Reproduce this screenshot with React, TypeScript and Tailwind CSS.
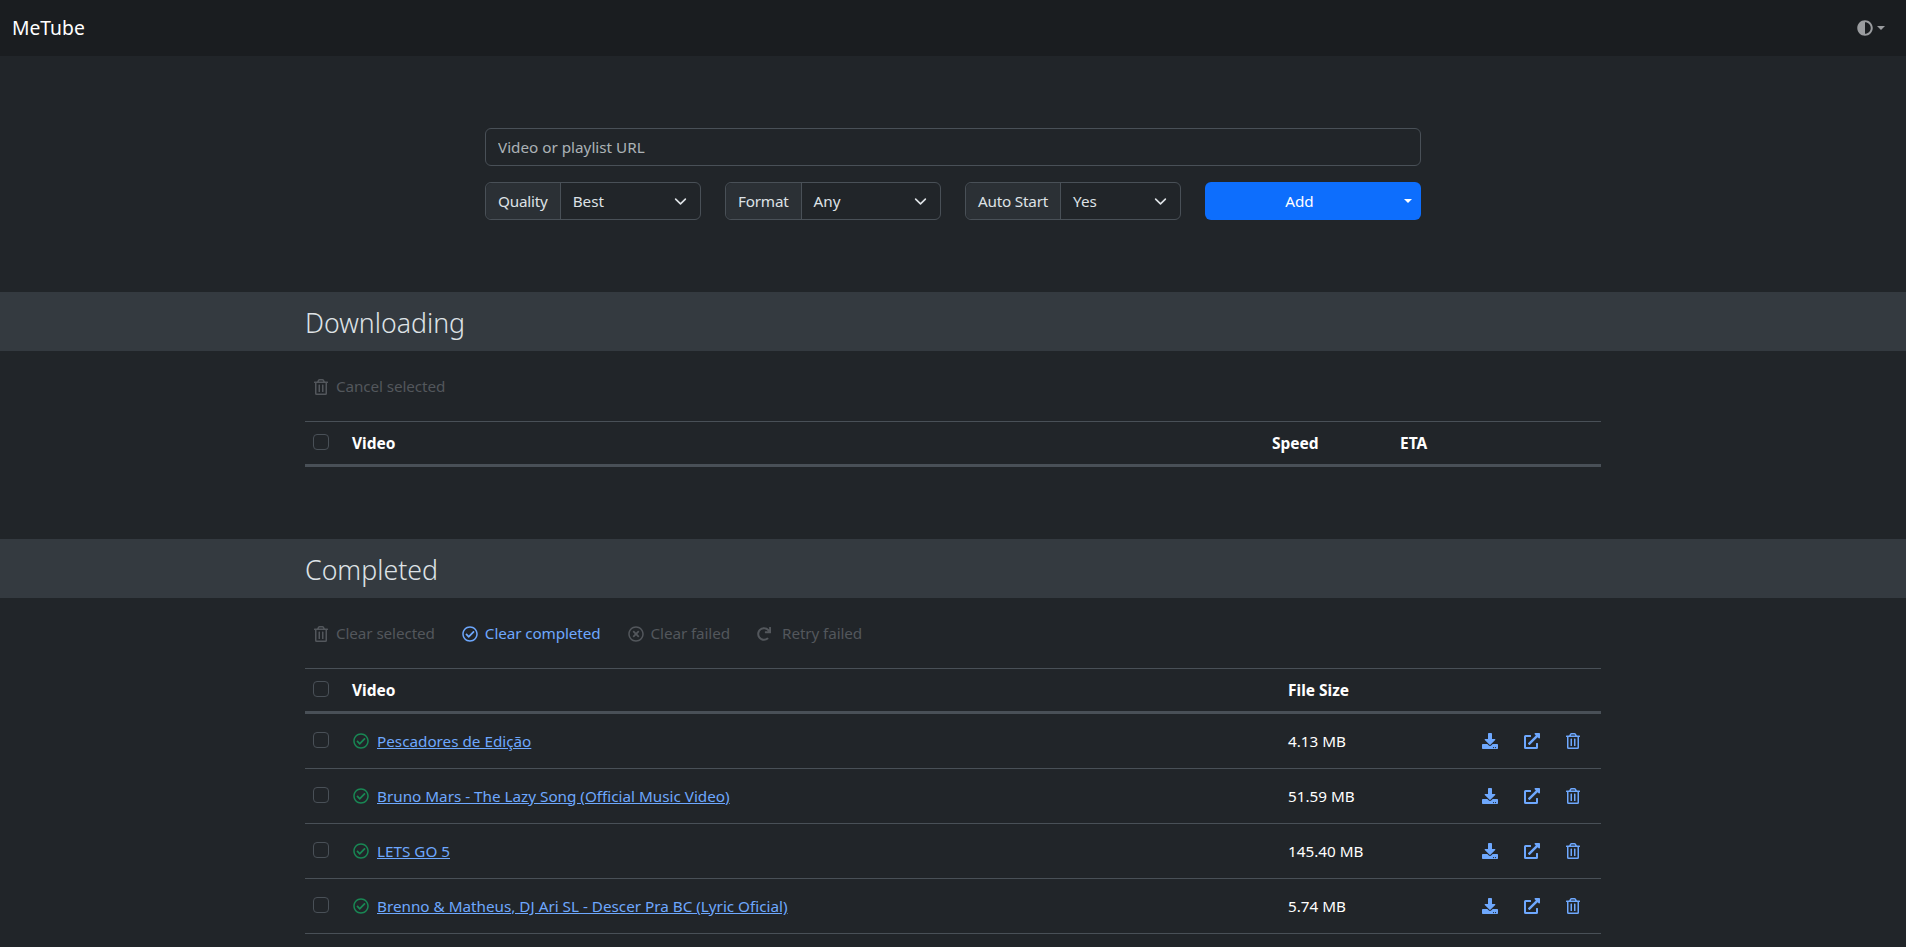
import { FaAdjust, FaDownload, FaExternalLinkAlt, FaRedo, FaRegCheckCircle, FaRegTimesCircle, FaRegTrashAlt } from "react-icons/fa"

const completed = [
  { title: "Pescadores de Edição", size: "4.13 MB" },
  { title: "Bruno Mars - The Lazy Song (Official Music Video)", size: "51.59 MB" },
  { title: "LETS GO 5", size: "145.40 MB" },
  { title: "Brenno & Matheus, DJ Ari SL - Descer Pra BC (Lyric Oficial)", size: "5.74 MB" },
]

function Chevron() {
  return (
    <svg viewBox="0 0 16 16" className="h-[13px] w-[13px] shrink-0" fill="none" stroke="#dee2e6" strokeWidth="2" strokeLinecap="round" strokeLinejoin="round">
      <path d="m2 5 6 6 6-6" />
    </svg>
  )
}

function SelectGroup({ label, value }: { label: string; value: string }) {
  return (
    <div className="flex h-[38px] rounded-md border border-[#495057] text-[#dee2e6]">
      <span className="flex items-center rounded-l-md border-r border-[#495057] bg-[#2b3035] px-3 tracking-[-0.2px]">{label}</span>
      <div className="flex flex-1 items-center justify-between pl-3 pr-[13px]">
        <span>{value}</span>
        <Chevron />
      </div>
    </div>
  )
}

function Checkbox() {
  return <input type="checkbox" className="mb-[3px] h-4 w-4 appearance-none rounded border border-[#495057] bg-[#212529]" />
}

function SectionHeader({ title }: { title: string }) {
  return (
    <div className="h-[59px] bg-[#343a40]">
      <div className="mx-auto w-[1296px] pt-[9px] text-[26.7px] leading-[43px] font-light text-[#dee2e6]">{title}</div>
    </div>
  )
}

function ActionButton({ icon, label, active }: { icon: React.ReactNode; label: string; active?: boolean }) {
  return (
    <button className={`flex items-center gap-[7px] px-[9px] tracking-[-0.1px] ${active ? "text-[#6ea8fe]" : "text-[#53575c]"}`}>
      {icon}
      <span>{label}</span>
    </button>
  )
}

export default function App() {
  return (
    <div className="min-h-[947px] bg-[#212529] font-['Noto_Sans',sans-serif] text-[15.25px] text-[#dee2e6]">
      {/* Navbar */}
      <nav className="flex h-14 items-center justify-between bg-[#1a1d20] pl-3 pr-[21px]">
        <span className="text-[19.3px] text-white">MeTube</span>
        <div className="flex items-center gap-1 text-[#9a9c9f]">
          <FaAdjust size={16} />
          <span className="h-0 w-0 border-x-[4px] border-t-[4px] border-x-transparent border-t-[#9a9c9f]" />
        </div>
      </nav>

      {/* Add form */}
      <div className="mx-auto w-[936px] pt-[72px] pb-[72px]">
        <input
          placeholder="Video or playlist URL"
          className="h-[38px] w-full rounded-md border border-[#495057] bg-[#212529] px-3 outline-none placeholder:text-[#dee2e6bf]"
        />
        <div className="mt-4 grid grid-cols-4 gap-6">
          <SelectGroup label="Quality" value="Best" />
          <SelectGroup label="Format" value="Any" />
          <SelectGroup label="Auto Start" value="Yes" />
          <div className="flex h-[38px] overflow-hidden rounded-md bg-[#0d6efd] text-white">
            <button className="flex-1">Add</button>
            <button className="flex w-[27px] items-center justify-center">
              <span className="h-0 w-0 border-x-[4px] border-t-[4px] border-x-transparent border-t-white" />
            </button>
          </div>
        </div>
      </div>

      {/* Downloading */}
      <SectionHeader title="Downloading" />
      <div className="mx-auto w-[1296px]">
        <div className="flex h-[70px] items-center pt-[1px]">
          <ActionButton icon={<FaRegTrashAlt size={16} className="mr-[1px] w-[14px]" />} label="Cancel selected" />
        </div>
        <div className="grid h-[46px] grid-cols-[47px_1fr_128px_201px] items-center border-t border-b-[3px] border-t-[#495057] border-b-[#495057] text-[15.5px] font-bold text-white">
          <div className="flex items-center pl-2">
            <Checkbox />
          </div>
          <span className="pt-[2px]">Video</span>
          <span className="pt-[2px]">Speed</span>
          <span className="pt-[2px]">ETA</span>
        </div>
      </div>

      {/* Completed */}
      <div className="mt-[72px]">
        <SectionHeader title="Completed" />
      </div>
      <div className="mx-auto w-[1296px]">
        <div className="flex h-[70px] items-center gap-[9px] pt-[1px]">
          <ActionButton icon={<FaRegTrashAlt size={16} className="mr-[1px] w-[14px]" />} label="Clear selected" />
          <ActionButton icon={<FaRegCheckCircle size={16} />} label="Clear completed" active />
          <ActionButton icon={<FaRegTimesCircle size={16} />} label="Clear failed" />
          <ActionButton icon={<FaRedo size={14} className="mr-[4px]" />} label="Retry failed" />
        </div>
        <div className="grid h-[46px] grid-cols-[47px_1fr_194px_119px] items-center border-t border-b-[3px] border-t-[#495057] border-b-[#495057] text-[15.5px] font-bold text-white">
          <div className="flex items-center pl-2">
            <Checkbox />
          </div>
          <span className="pt-[2px]">Video</span>
          <span className="pt-[2px]">File Size</span>
          <span />
        </div>
        {completed.map((row) => (
          <div key={row.title} className="grid h-[55px] grid-cols-[47px_1fr_194px_119px] items-center border-b border-[#495057] text-white">
            <div className="flex items-center pl-2">
              <Checkbox />
            </div>
            <div className="flex items-center gap-2 pl-[1px]">
              <FaRegCheckCircle size={16} className="text-[#198754]" />
              <a href="#" className="text-[#6ea8fe] underline">
                {row.title}
              </a>
            </div>
            <span>{row.size}</span>
            <div className="flex items-center gap-[26px] text-[#6ea8fe]">
              <FaDownload size={16} />
              <FaExternalLinkAlt size={16} />
              <FaRegTrashAlt size={16} className="w-[14px]" />
            </div>
          </div>
        ))}
      </div>
    </div>
  )
}
